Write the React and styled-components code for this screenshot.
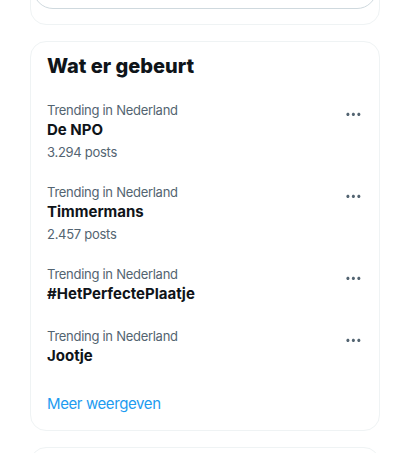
import React from "react";
import styled, { createGlobalStyle } from "styled-components";

const Global = createGlobalStyle`
  html, body { margin: 0; padding: 0; background: #ffffff; }
  body { font-family: Inter, "Noto Sans", Arial, sans-serif; -webkit-font-smoothing: antialiased; }
`;

const Column = styled.div`
  width: 350px;
  margin-left: 30px;
  display: flex;
  flex-direction: column;
  gap: 16px;
`;

const Panel = styled.section`
  border: 1px solid #eff3f4;
  border-radius: 16px;
  box-sizing: border-box;
  display: flex;
  flex-direction: column;
  overflow: hidden;
`;

const TopPanel = styled(Panel)`
  margin-top: -60px;
  height: 85px;
  padding: 0 2px 15px;
  justify-content: flex-end;
`;

const PillBox = styled.div`
  height: 40px;
  border: 1px solid #cfd9de;
  border-radius: 20px;
  box-sizing: border-box;
`;

const Title = styled.h2`
  margin: 0;
  padding: 12px 16px;
  font-size: 20px;
  line-height: 24px;
  font-weight: 800;
  color: #0f1419;
`;

const Trend = styled.div`
  padding: 12px 16px;
  display: flex;
  align-items: flex-start;
  justify-content: space-between;
`;

const TrendText = styled.div`
  display: flex;
  flex-direction: column;
`;

const Meta = styled.span`
  font-size: 13px;
  line-height: 16px;
  letter-spacing: -0.28px;
  color: #536471;
`;

const Name = styled.span`
  padding-top: 2px;
  font-size: 15px;
  line-height: 20px;
  font-weight: 700;
  color: #0f1419;
`;

const Count = styled(Meta)`
  padding-top: 4px;
`;

const MoreIcon = styled.svg`
  width: 18.75px;
  height: 18.75px;
  margin-top: 3px;
  fill: #536471;
  flex: none;
`;

const ShowMore = styled.a`
  padding: 16px;
  font-size: 15px;
  line-height: 20px;
  letter-spacing: -0.4px;
  color: #1d9bf0;
  text-decoration: none;
`;

const NextPanel = styled(Panel)`
  height: 40px;
`;

const Dots = () => (
  <MoreIcon viewBox="0 0 24 24" aria-hidden="true">
    <path d="M3 12c0-1.1.9-2 2-2s2 .9 2 2-.9 2-2 2-2-.9-2-2zm9 2c1.1 0 2-.9 2-2s-.9-2-2-2-2 .9-2 2 .9 2 2 2zm7 0c1.1 0 2-.9 2-2s-.9-2-2-2-2 .9-2 2 .9 2 2 2z" />
  </MoreIcon>
);

const trends = [
  { name: "De NPO", count: "3.294 posts" },
  { name: "Timmermans", count: "2.457 posts" },
  { name: "#HetPerfectePlaatje" },
  { name: "Jootje" },
];

export default function App() {
  return (
    <>
      <Global />
      <Column>
        <TopPanel>
          <PillBox />
        </TopPanel>
        <Panel>
          <Title>Wat er gebeurt</Title>
          {trends.map((t) => (
            <Trend key={t.name}>
              <TrendText>
                <Meta>Trending in Nederland</Meta>
                <Name>{t.name}</Name>
                {t.count && <Count>{t.count}</Count>}
              </TrendText>
              <Dots />
            </Trend>
          ))}
          <ShowMore href="#">Meer weergeven</ShowMore>
        </Panel>
        <NextPanel />
      </Column>
    </>
  );
}
